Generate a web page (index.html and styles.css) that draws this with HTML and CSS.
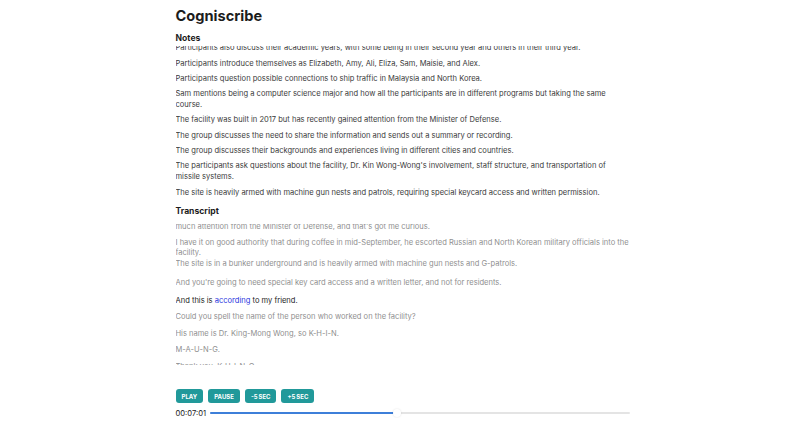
FILE: index.html
```html
<!DOCTYPE html>
<html lang="en">
<head>
<meta charset="utf-8">
<title>Cogniscribe</title>
<link rel="stylesheet" href="styles.css">
</head>
<body>
<main class="app">
  <h1 class="title">Cogniscribe</h1>
  <section class="panel">
    <h2 class="panel-title">Notes</h2>
    <div class="scroller notes" id="notes">
      <p class="note">The meeting opens with introductions and a short overview of the project.</p>
      <p class="note">Participants also discuss their academic years, with some being in their second year and others in their third year.</p>
      <p class="note">Participants introduce themselves as Elizabeth, Amy, Ali, Eliza, Sam, Maisie, and Alex.</p>
      <p class="note">Participants question possible connections to ship traffic in Malaysia and North Korea.</p>
      <p class="note">Sam mentions being a computer science major and how all the participants are in different programs but taking the same course.</p>
      <p class="note">The facility was built in 2017 but has recently gained attention from the Minister of Defense.</p>
      <p class="note">The group discusses the need to share the information and sends out a summary or recording.</p>
      <p class="note">The group discusses their backgrounds and experiences living in different cities and countries.</p>
      <p class="note">The participants ask questions about the facility, Dr. Kin Wong-Wong's involvement, staff structure, and transportation of missile systems.</p>
      <p class="note">The site is heavily armed with machine gun nests and patrols, requiring special keycard access and written permission.</p>
    </div>
  </section>
  <section class="panel">
    <h2 class="panel-title panel-title-gap">Transcript</h2>
    <div class="scroller transcript" id="transcript">
      <p class="seg">So there's this facility that was built back in 2017, and it's recently gained so</p>
      <p class="seg">much attention from the Minister of Defense, and that's got me curious.</p>
      <p class="seg">I have it on good authority that during coffee in mid-September, he escorted Russian and North Korean military officials into the facility.</p>
      <p class="seg seg-tight">The site is in a bunker underground and is heavily armed with machine gun nests and G-patrols.</p>
      <p class="seg seg-wide">And you're going to need special key card access and a written letter, and not for residents.</p>
      <p class="seg seg-current">And this is <span class="word-active">according</span> to my friend.</p>
      <p class="seg">Could you spell the name of the person who worked on the facility?</p>
      <p class="seg">His name is Dr. King-Mong Wong, so K-H-I-N.</p>
      <p class="seg">M-A-U-N-G.</p>
      <p class="seg">Thank you, K-H-I-N-G.</p>
      <p class="seg">And where exactly is the facility located?</p>
    </div>
  </section>
  <section class="player">
    <div class="controls">
      <button class="btn" type="button">Play</button>
      <button class="btn" type="button">Pause</button>
      <button class="btn" type="button">-5 sec</button>
      <button class="btn" type="button">+5 sec</button>
    </div>
    <div class="timeline">
      <span class="time">00:07:01</span>
      <div class="track">
        <div class="fill" style="width: 44.5%"></div>
        <div class="thumb" style="left: 44.5%"></div>
      </div>
    </div>
  </section>
</main>
<script src="script.js"></script>
</body>
</html>
```

FILE: styles.css
```css
* { box-sizing: border-box; }
html, body { margin: 0; padding: 0; background: #ffffff; }
body {
  font-family: Inter, "Noto Sans", "Liberation Sans", sans-serif;
  color: #222222;
}
.app {
  width: 455px;
  margin: 0 auto;
  padding-top: 6px;
  display: flex;
  flex-direction: column;
}
.title {
  margin: 0;
  font-size: 14.6px;
  line-height: 20px;
  font-weight: 700;
  color: #1c1c1c;
}
.panel { display: flex; flex-direction: column; }
.panel-title {
  margin: 6px 0 0;
  font-size: 8.6px;
  line-height: 12px;
  font-weight: 700;
  color: #1c1c1c;
}
.scroller {
  overflow-y: auto;
  scrollbar-width: none;
}
.scroller::-webkit-scrollbar { display: none; }
.notes { height: 153px; margin-top: 2px; }
.note {
  margin: 0 0 4.3px;
  font-size: 7.55px;
  line-height: 11px;
  color: #3a3a3a;
}
.transcript { height: 141px; margin-top: 7px; }
.seg {
  margin: 0 0 7px;
  font-size: 7.55px;
  line-height: 9.5px;
  color: #8f8f8f;
}
.seg-tight { margin-top: -5.5px; }
.seg-wide { margin-top: 9.5px; }
.seg-current { margin-top: 8.5px; color: #1c1c1c; }
.word-active { color: #2a35e0; }
.player { margin-top: 24px; display: flex; flex-direction: column; gap: 5px; }
.controls { display: flex; gap: 5px; }
.btn {
  border: 0;
  border-radius: 3px;
  background: #21999a;
  color: #ffffff;
  font-family: inherit;
  font-size: 6px;
  font-weight: 700;
  text-transform: uppercase;
  word-spacing: -0.5px;
  height: 14px;
  padding: 0 6px;
  cursor: pointer;
}
.timeline { display: flex; align-items: center; gap: 4px; height: 10px; }
.time { font-size: 7.6px; color: #222222; }
.track {
  position: relative;
  flex: 1;
  height: 2px;
  background: #e4e4e4;
  border-radius: 1px;
  margin-right: 1px;
}
.fill {
  height: 100%;
  background: #3d7fd9;
  border-radius: 1px;
}
.thumb {
  position: absolute;
  top: 50%;
  width: 8px;
  height: 8px;
  margin: -4px 0 0 -4px;
  border-radius: 50%;
  background: #ffffff;
  box-shadow: 0 0 2px rgba(0,0,0,0.12);
}
```

FILE: script.js
```js
document.getElementById('notes').scrollTop = 19;
document.getElementById('transcript').scrollTop = 19;
```
